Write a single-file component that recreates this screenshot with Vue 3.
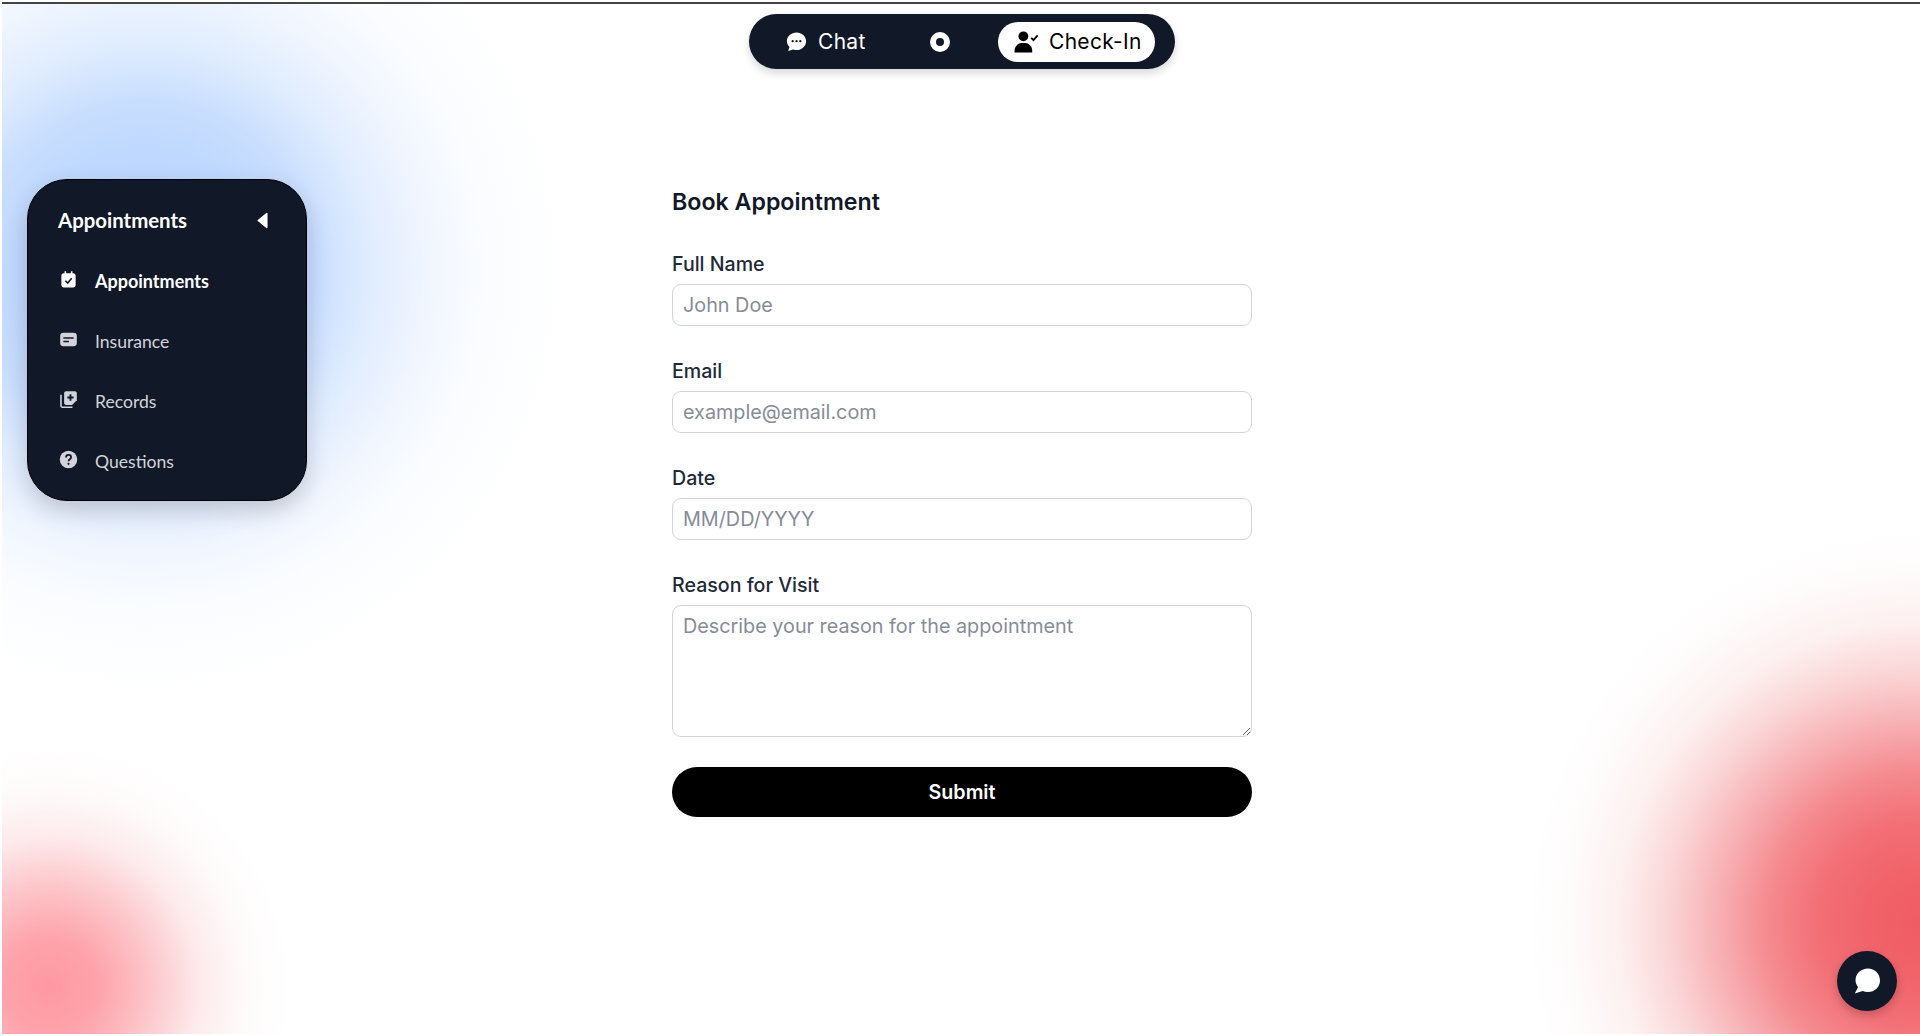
<template>
  <div class="page">
    <div class="blob blob-blue"></div>
    <div class="blob blob-red-left"></div>
    <div class="blob blob-red-right"></div>

    <nav class="topnav">
      <div class="tab">
        <svg class="tab-icon" viewBox="0 0 24 24">
          <path fill="#fff" d="M12 2.500c-5.500 0-10 3.900-10 9 0 2.500 1 4.600 2.700 6.200L3.300 22l5.200-1.700c1.100.4 2.300.6 3.500.6 5.500 0 10-3.900 10-9.200s-4.500-9.200-10-9.200z" />
          <circle cx="8" cy="11.700" r="1.200" fill="#111827" />
          <circle cx="12" cy="11.700" r="1.200" fill="#111827" />
          <circle cx="16" cy="11.700" r="1.200" fill="#111827" />
        </svg>
        <span>Chat</span>
      </div>
      <span class="toggle"></span>
      <div class="tab active">
        <svg class="tab-icon user" viewBox="0 0 24 24">
          <circle cx="9" cy="7" r="4.700" />
          <path d="M0.500 22.500v-1.500c0-4.500 3.500-7.500 7-7.500h3c3.500 0 7 3 7 7.500v1.500z" />
          <path fill="none" stroke="#000" stroke-width="1.800" d="M16.500 8.500l2.200 2.200 4-4.500" />
        </svg>
        <span>Check-In</span>
      </div>
    </nav>

    <div class="content">
      <aside class="sidebar">
        <div class="sidebar-head">
          <span>Appointments</span>
          <svg class="caret" viewBox="0 0 10 16"><path fill="#fff" stroke="#fff" stroke-linejoin="round" stroke-width="1.500" d="M9 1.500v13L1 8z" /></svg>
        </div>
        <a v-for="item in menu" :key="item.label" class="menu-item" :class="{ current: item.current }">
          <svg class="menu-icon" viewBox="0 0 24 24" v-html="item.icon"></svg>
          <span>{{ item.label }}</span>
        </a>
      </aside>

      <form class="booking" @submit.prevent>
        <h2>Book Appointment</h2>
        <label>Full Name</label>
        <input type="text" placeholder="John Doe" />
        <label>Email</label>
        <input type="email" placeholder="example@email.com" />
        <label>Date</label>
        <input type="text" placeholder="MM/DD/YYYY" />
        <label>Reason for Visit</label>
        <textarea placeholder="Describe your reason for the appointment"></textarea>
        <button type="submit">Submit</button>
      </form>
    </div>

    <button class="chat-fab" type="button">
      <svg viewBox="0 0 26 26">
        <path fill="#fff" d="M14 .500C7 .500 1.500 5.500 1.500 12c0 2.700 1 5.200 2.600 7.100L0.800 25.500l7.800-2.500c1.600.7 3.500 1.100 5.400 1.100 6.800 0 12-5.200 12-11.800S20.800.500 14 .500z" />
      </svg>
    </button>
  </div>
</template>

<script setup>
const menu = [
  {
    label: 'Appointments',
    current: true,
    icon: '<path fill="currentColor" d="M7 1.500h2V4h6V1.500h2V4h1c1.700 0 3 1.300 3 3v12c0 1.700-1.300 3-3 3H6c-1.700 0-3-1.300-3-3V7c0-1.700 1.300-3 3-3h1z"/><path fill="none" stroke="#111827" stroke-width="2" d="M8 13.500l3 3 5-6"/>'
  },
  {
    label: 'Insurance',
    icon: '<rect x="1.500" y="3.500" width="21" height="17" rx="4" fill="currentColor"/><path fill="none" stroke="#111827" stroke-width="2" d="M5.500 10h13M5.500 14.500h7"/>'
  },
  {
    label: 'Records',
    icon: '<path fill="currentColor" d="M9 1.500h11c1.400 0 2.500 1.100 2.500 2.500v9l-6 6H9c-1.400 0-2.500-1.100-2.500-2.500V4C6.500 2.600 7.600 1.500 9 1.500z"/><path fill="none" stroke="currentColor" stroke-width="2" d="M2.500 6v14c0 1 .7 1.700 1.700 1.700H17"/><path fill="none" stroke="#111827" stroke-width="2.400" d="M14.500 5.500v8M10.500 9.500h8"/>'
  },
  {
    label: 'Questions',
    icon: '<circle cx="12" cy="12" r="11" fill="currentColor"/><path fill="none" stroke="#111827" stroke-width="2.200" d="M8.800 9.500c0-2 1.500-3.200 3.300-3.200s3.200 1.200 3.200 2.900c0 2.500-3.300 2.500-3.300 5"/><circle cx="12" cy="17.500" r="1.400" fill="#111827"/>'
  }
];
</script>

<style>
html,
body {
  margin: 0;
  background: #fff;
  overflow: hidden;
}
</style>

<style scoped>
.page {
  position: relative;
  box-sizing: border-box;
  height: 1032px;
  margin: 2px 0 2px 2px;
  padding-left: 2px;
  border-top: 2px solid #444;
  overflow: hidden;
  background: #fff;
  font-family: Inter, "Liberation Sans", sans-serif;
}

.blob {
  position: absolute;
  border-radius: 50%;
}

.blob-blue {
  left: -287px;
  top: -164px;
  width: 860px;
  height: 860px;
  background: radial-gradient(circle at center, #b8d3ff 0, #bfd8ff 120px, #c9deff 170px, #deebff 220px, #f0f5ff 280px, #fafcff 340px, #fff 420px);
}

.blob-red-left {
  left: -252px;
  top: 683px;
  width: 600px;
  height: 600px;
  background: radial-gradient(circle at center, #fe98a1 0, #fea4ac 50px, #fcc6ca 100px, #fdeaec 150px, #fefafa 195px, #fff 240px);
}

.blob-red-right {
  left: 1496px;
  top: 499px;
  width: 840px;
  height: 840px;
  background: radial-gradient(circle at center, #f05c64 0, #f16269 50px, #f26f76 100px, #f48a8f 150px, #f7b0b4 200px, #fad5d6 250px, #fdf0f0 300px, #fefbfb 350px, #fff 390px);
}

.topnav {
  position: relative;
  box-sizing: border-box;
  display: flex;
  align-items: center;
  width: 426px;
  height: 55px;
  margin: 10px auto 0;
  padding: 0 20px;
  border-radius: 28px;
  background: #111827;
  box-shadow: 0 4px 8px rgba(0, 0, 0, 0.16);
  color: #fff;
  font-family: Inter, sans-serif;
  font-size: 21px;
  letter-spacing: 0.3px;
}

.tab {
  display: flex;
  align-items: center;
  gap: 10px;
  box-sizing: border-box;
  width: 157px;
  height: 40px;
  padding-left: 16px;
  border-radius: 20px;
}

.tab.active {
  background: #fff;
  color: #000;
}

.tab-icon {
  width: 23px;
  height: 23px;
  flex: none;
}

.tab-icon.user {
  fill: #000;
  width: 25px;
  height: 25px;
}

.toggle {
  box-sizing: border-box;
  width: 20px;
  height: 20px;
  margin: 0 48px 0 4px;
  border: 6px solid #fff;
  border-radius: 50%;
  flex: none;
}

.content {
  position: relative;
  display: grid;
  grid-template-columns: 1fr 580px 1fr;
  margin-top: 110px;
}

.sidebar {
  box-sizing: border-box;
  width: 280px;
  height: 322px;
  margin-left: 23px;
  padding: 25px 30px 0;
  border: 1px solid #000;
  border-radius: 40px;
  background: #111827;
  box-shadow: 0 10px 25px rgba(0, 0, 0, 0.18);
  color: #d1d5db;
  font-family: Lato, sans-serif;
  font-size: 17.600px;
}

.sidebar-head {
  display: flex;
  align-items: center;
  justify-content: space-between;
  height: 30px;
  padding-right: 8px;
  margin-bottom: 16px;
  color: #fff;
  font-size: 20.400px;
  font-weight: 700;
}

.caret {
  width: 11px;
  height: 17px;
}

.menu-item {
  display: flex;
  align-items: center;
  height: 60px;
}

.menu-item.current {
  color: #fff;
  font-size: 18px;
  font-weight: 700;
}

.menu-icon {
  width: 19px;
  height: 19px;
  margin: -3px 17px 0 1px;
  flex: none;
}

.booking {
  display: flex;
  flex-direction: column;
  padding-top: 7px;
}

.booking h2 {
  margin: 0 0 32px;
  color: #111827;
  font-size: 23.200px;
  line-height: 32px;
  font-weight: 600;
}

.booking label {
  height: 28px;
  margin-bottom: 6px;
  color: #1f2937;
  font-size: 19.600px;
  line-height: 28px;
  font-weight: 500;
}

.booking input,
.booking textarea {
  box-sizing: border-box;
  width: 100%;
  height: 42px;
  margin-bottom: 31px;
  padding: 0 10px;
  border: 1px solid #d1d5db;
  border-radius: 9px;
  background: #fff;
  color: #111827;
  font-family: inherit;
  font-size: 19.800px;
  outline: none;
}

.booking input::placeholder,
.booking textarea::placeholder {
  color: #868c98;
  opacity: 1;
}

.booking textarea {
  display: block;
  height: 132px;
  margin-bottom: 30px;
  padding: 7px 10px;
  line-height: 26px;
}

.booking button {
  height: 50px;
  border: 0;
  border-radius: 25px;
  background: #000;
  color: #fff;
  font-family: inherit;
  font-size: 19.700px;
  font-weight: 600;
}

.chat-fab {
  position: absolute;
  left: 1835px;
  top: 947px;
  display: flex;
  align-items: center;
  justify-content: center;
  width: 60px;
  height: 60px;
  padding: 0;
  border: 0;
  border-radius: 50%;
  background: #111827;
  box-shadow: 0 4px 10px rgba(0, 0, 0, 0.2);
}

.chat-fab svg {
  width: 26px;
  height: 26px;
}
</style>
